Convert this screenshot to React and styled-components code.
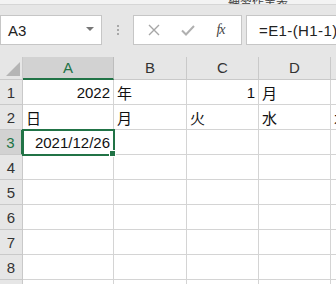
import React from 'react';
import styled, { createGlobalStyle, css } from 'styled-components';

const GlobalStyle = createGlobalStyle`
  html, body {
    margin: 0;
    padding: 0;
    background: #ffffff;
  }
  body {
    font-family: "Liberation Sans", "Noto Sans CJK JP", sans-serif;
  }
`

const Window = styled.div`
  width: 336px;
  height: 284px;
  overflow: hidden;
  background: #e6e6e6;
  display: flex;
  flex-direction: column;
`

const TitleStrip = styled.div`
  height: 4px;
  flex: none;
  background: #f3f3f3;
  border-bottom: 1px solid #d6d6d6;
  display: flex;
  align-items: flex-end;
  overflow: hidden;
  padding-left: 228px;
`

const TitleText = styled.span`
  font-size: 12px;
  line-height: 12px;
  color: #444;
  white-space: nowrap;
  margin-bottom: -5px;
`

const FormulaBar = styled.div`
  display: flex;
  align-items: center;
  padding: 10px 0 12px 0;
  flex: none;
`

const boxBase = css`
  height: 30px;
  box-sizing: border-box;
  background: #ffffff;
  border: 1px solid #c6c6c6;
  display: flex;
  align-items: center;
`

const NameBox = styled.div`
  ${boxBase}
  width: 102px;
  padding: 0 7px 0 7px;
  justify-content: space-between;
  font-size: 15px;
  color: #222;
`

const Caret = styled.span`
  width: 0;
  height: 0;
  border-left: 4px solid transparent;
  border-right: 4px solid transparent;
  border-top: 4px solid #777;
  margin-top: -2px;
`

const Dots = styled.div`
  width: 31px;
  display: flex;
  flex-direction: column;
  align-items: center;
  gap: 2px;
`

const Dot = styled.span`
  width: 2px;
  height: 2px;
  background: #a8a8a8;
`

const ActionBox = styled.div`
  ${boxBase}
  width: 109px;
  justify-content: space-around;
  padding: 0 6px 0 4px;
`

const FormulaBox = styled.div`
  ${boxBase}
  flex: 1;
  margin-left: 4px;
  border-right: none;
  padding-left: 12px;
  font-size: 15px;
  letter-spacing: 0.4px;
  color: #222;
  white-space: nowrap;
  overflow: hidden;
`

const Fx = styled.span`
  font-family: "Liberation Serif", serif;
  font-style: italic;
  font-size: 14px;
  color: #444;
  letter-spacing: -1px;
`

const Sheet = styled.div`
  flex: 1;
  display: grid;
  grid-template-columns: 23px 91px 73px 72px 72px 72px;
  grid-auto-rows: 25px;
  grid-template-rows: 23px;
  background: #ffffff;
  font-family: "Liberation Sans", "Noto Sans CJK JP", sans-serif;
`

const Corner = styled.div`
  background: #e6e6e6;
  border-right: 1px solid #c9c9c9;
  border-bottom: 1px solid #c9c9c9;
  box-sizing: border-box;
  display: flex;
  align-items: flex-end;
  justify-content: flex-end;
  padding: 0 2px 3px 0;
`

const ColHeader = styled.div`
  box-sizing: border-box;
  background: ${p => (p.$active ? '#d2d2d2' : '#e6e6e6')};
  border-right: 1px solid ${p => (p.$active ? '#bdbdbd' : '#c9c9c9')};
  border-bottom: ${p => (p.$active ? '2px solid #217346' : '1px solid #c9c9c9')};
  color: ${p => (p.$active ? '#217346' : '#333')};
  font-size: 15px;
  display: flex;
  align-items: center;
  justify-content: center;
  padding-bottom: ${p => (p.$active ? '0' : '1px')};
`

const RowHeader = styled.div`
  box-sizing: border-box;
  background: ${p => (p.$active ? '#d2d2d2' : '#e6e6e6')};
  border-right: ${p => (p.$active ? '2px solid #217346' : '1px solid #c9c9c9')};
  border-bottom: 1px solid #c9c9c9;
  color: ${p => (p.$active ? '#217346' : '#333')};
  font-size: 15px;
  display: flex;
  align-items: center;
  justify-content: center;
`

const Cell = styled.div`
  position: relative;
  box-sizing: border-box;
  border-right: 1px solid #d4d4d4;
  border-bottom: 1px solid #d4d4d4;
  font-size: 15px;
  color: #111;
  padding: 0 3px;
  display: flex;
  align-items: center;
  justify-content: ${p => (p.$right ? 'flex-end' : 'flex-start')};
  white-space: nowrap;
  overflow: visible;
  ${p => p.$active && css`
    outline: 2px solid #217346;
    outline-offset: -1px;
    z-index: 1;
  `}
`

const FillHandle = styled.span`
  position: absolute;
  right: -3px;
  bottom: -3px;
  width: 5px;
  height: 5px;
  background: #217346;
  border: 1px solid #ffffff;
`

const columns = ['A', 'B', 'C', 'D', 'E'];

const data = {
  1: [{ v: '2022', right: true }, { v: '年' }, { v: '1', right: true }, { v: '月' }, { v: '' }],
  2: [{ v: '日' }, { v: '月' }, { v: '火' }, { v: '水' }, { v: '木' }],
  3: [{ v: '2021/12/26', right: true, active: true }, { v: '' }, { v: '' }, { v: '' }, { v: '' }],
};

function App() {
  const rows = [1, 2, 3, 4, 5, 6, 7, 8, 9];

  return (
    <Window>
      <GlobalStyle />
      <TitleStrip>
        <TitleText>練習作業表</TitleText>
      </TitleStrip>
      <FormulaBar>
        <NameBox>
          <span>A3</span>
          <Caret />
        </NameBox>
        <Dots>
          <Dot />
          <Dot />
          <Dot />
        </Dots>
        <ActionBox>
          <svg width="12" height="12" viewBox="0 0 12 12">
            <path d="M1 1L11 11M11 1L1 11" stroke="#a6a6a6" strokeWidth="1.4" fill="none" />
          </svg>
          <svg width="14" height="12" viewBox="0 0 14 12">
            <path d="M1 6.5L5 10.5L13 2" stroke="#b0b0b0" strokeWidth="2" fill="none" />
          </svg>
          <Fx>fx</Fx>
        </ActionBox>
        <FormulaBox>=E1-(H1-1)</FormulaBox>
      </FormulaBar>
      <Sheet>
        <Corner>
          <svg width="14" height="14" viewBox="0 0 14 14">
            <path d="M14 0L14 14L0 14Z" fill="#b5b5b5" />
          </svg>
        </Corner>
        {columns.map(c => (
          <ColHeader key={c} $active={c === 'A'}>{c}</ColHeader>
        ))}
        {rows.map(r => (
          <React.Fragment key={r}>
            <RowHeader $active={r === 3}>{r}</RowHeader>
            {columns.map((c, i) => {
              const cell = (data[r] && data[r][i]) || { v: '' };
              return (
                <Cell key={c} $right={cell.right} $active={cell.active}>
                  {cell.v}
                  {cell.active && <FillHandle />}
                </Cell>
              );
            })}
          </React.Fragment>
        ))}
      </Sheet>
    </Window>
  );
}

export default App;
